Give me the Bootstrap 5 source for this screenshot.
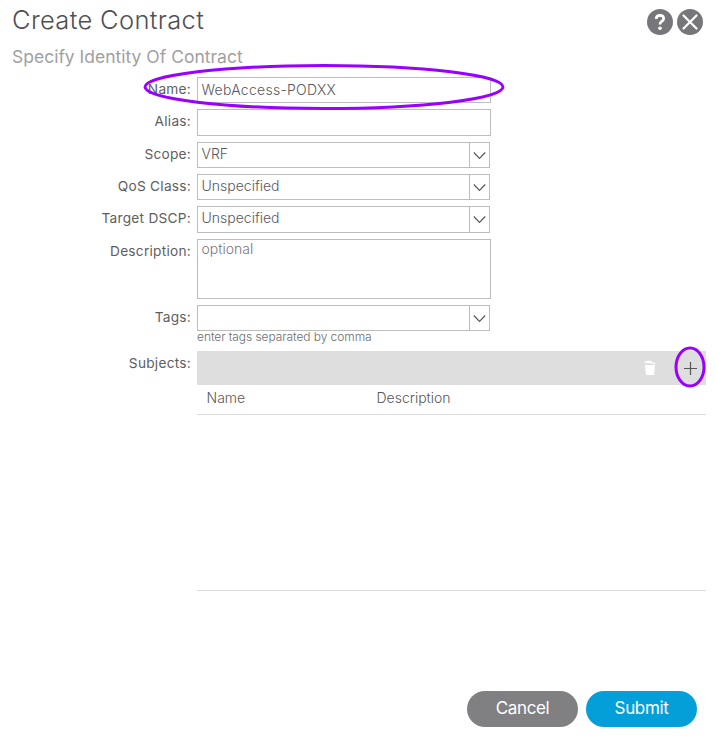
<!DOCTYPE html>
<html lang="en">
<head>
<meta charset="utf-8">
<meta name="viewport" content="width=device-width, initial-scale=1">
<title>Create Contract</title>
<link href="https://cdn.jsdelivr.net/npm/bootstrap@5.3.0/dist/css/bootstrap.min.css" rel="stylesheet">
<style>
body{font-family:Inter,"Liberation Sans",sans-serif;font-size:14px;line-height:18px;color:#58585b;background:#fff}
.dialog{width:715px;height:737px;padding:0 9px 0 12px}
.dialog-head{height:45px;padding-top:4px}
.dialog-title{font-size:25.5px;font-weight:300;line-height:32px;color:#505052;letter-spacing:.34px}
.dialog-sub{font-size:17.5px;line-height:24px;height:32px;font-weight:400;color:#a0a0a2}
.round-icons{padding-top:5px;gap:4px;margin-right:3px}
.round-icons button{width:26px;height:26px}
.form-rows{gap:6px}
.lbl{width:179px;margin-right:6px;padding-top:3px;font-size:13.7px;letter-spacing:.25px;color:#5e5e61}
.field{width:294px;height:26px;border:1px solid #bdbdbd;padding:3px 3.500px;font-weight:300;color:#58585b;border-radius:0;background:#fff}
.field.name-value{letter-spacing:.27px}
.field.tall{height:27px}
.field.combo{width:293px;padding:0 0 0 3.5px}
.combo-text{padding-top:2px}
.combo-arrow{width:20px;border-left:1px solid #bdbdbd;padding-right:1px}
.field.area{height:60px;padding:0 3.5px;line-height:17px;color:#77777a}
.hint{font-size:12px;line-height:12px;height:13px;letter-spacing:-.07px;font-weight:300;color:#6c6c6f}
.subjects{margin-top:1px}
.toolbar{height:34px;background:#dedede;padding-right:9px}
.trash{margin-right:26px}
.cols{height:30px;border-bottom:1px solid #dcdcdc;font-weight:300;padding:4px 0 0 9.5px}
.cols span:first-child{width:170px}
.grid-body{height:176px;border-bottom:1px solid #dcdcdc}
.pill{width:111px;height:36px;border:0;font-size:17px;line-height:24px;letter-spacing:-.35px;color:#fff;padding:0 0 3px}
.pill-grey{background:#808083}
.pill-blue{background:#049fd9}
.foot{margin-top:100px;gap:8px;padding-right:9px}
.ring{left:0;top:0;pointer-events:none}
</style>
<script src="https://cdn.jsdelivr.net/npm/bootstrap@5.3.0/dist/js/bootstrap.bundle.min.js"></script>
</head>
<body class="overflow-hidden">
<main class="dialog position-relative">
  <header class="dialog-head d-flex justify-content-between">
    <h1 class="dialog-title m-0">Create Contract</h1>
    <div class="round-icons d-flex">
      <button class="btn p-0 border-0 d-flex" aria-label="Help"><svg width="26" height="26" viewBox="0 0 26 26"><circle cx="13" cy="13" r="13" fill="#77777b"/><path d="M9.3 10V9.2Q9.6 6.3 13 6.3Q16.7 6.400 16.7 9.6Q16.7 11.3 14.7 12.4Q13 13.3 13 15.5" fill="none" stroke="#fff" stroke-width="2.7"/><circle cx="13" cy="19.3" r="1.8" fill="#fff"/></svg></button>
      <button class="btn p-0 border-0 d-flex" aria-label="Close"><svg width="26" height="26" viewBox="0 0 26 26"><circle cx="13" cy="13" r="13" fill="#77777b"/><path d="M6.5 6.5L19.5 19.5M19.5 6.5L6.5 19.5" stroke="#fff" stroke-width="2.2" stroke-linecap="round"/></svg></button>
    </div>
  </header>
  <h2 class="dialog-sub m-0">Specify Identity Of Contract</h2>
  <form class="form-rows d-flex flex-column">
    <div class="d-flex"><label class="lbl text-end">Name:</label><div class="field name-value">WebAccess-PODXX</div></div>
    <div class="d-flex"><label class="lbl text-end">Alias:</label><div class="field tall"></div></div>
    <div class="d-flex"><label class="lbl text-end">Scope:</label><div class="field combo d-flex"><span class="combo-text flex-grow-1">VRF</span><span class="combo-arrow d-flex align-items-center justify-content-center"><svg width="13" height="9" viewBox="0 0 13 9"><path d="M.8 1.5L6.5 7.3L12.2 1.5" fill="none" stroke="#58585b" stroke-width="1.2"/></svg></span></div></div>
    <div class="d-flex"><label class="lbl text-end">QoS Class:</label><div class="field combo d-flex"><span class="combo-text flex-grow-1">Unspecified</span><span class="combo-arrow d-flex align-items-center justify-content-center"><svg width="13" height="9" viewBox="0 0 13 9"><path d="M.8 1.5L6.5 7.3L12.2 1.5" fill="none" stroke="#58585b" stroke-width="1.2"/></svg></span></div></div>
    <div class="d-flex"><label class="lbl text-end">Target DSCP:</label><div class="field combo tall d-flex"><span class="combo-text flex-grow-1">Unspecified</span><span class="combo-arrow d-flex align-items-center justify-content-center"><svg width="13" height="9" viewBox="0 0 13 9"><path d="M.8 1.5L6.5 7.3L12.2 1.5" fill="none" stroke="#58585b" stroke-width="1.2"/></svg></span></div></div>
    <div class="d-flex"><label class="lbl text-end">Description:</label><div class="field area">optional</div></div>
    <div class="d-flex"><label class="lbl text-end">Tags:</label><div><div class="field combo d-flex"><span class="flex-grow-1"></span><span class="combo-arrow d-flex align-items-center justify-content-center"><svg width="13" height="9" viewBox="0 0 13 9"><path d="M.8 1.5L6.5 7.3L12.2 1.5" fill="none" stroke="#58585b" stroke-width="1.2"/></svg></span></div><div class="hint">enter tags separated by comma</div></div></div>
    <div class="subjects d-flex"><label class="lbl text-end">Subjects:</label>
      <div class="flex-grow-1">
        <div class="toolbar d-flex justify-content-end align-items-center">
          <svg class="trash" width="17" height="18" viewBox="0 0 17 18"><path d="M3.500 2.7L6 2.3L6.5 1.600L10 2L10.5 2.8L14.6 4.200V5.200L10 4.200L3.500 4ZM4 6H14L13 16H5Z" fill="#fff"/></svg>
          <svg width="13" height="13" viewBox="0 0 13 13"><path d="M6.5 0V13M0 6.5H13" stroke="#58585b" stroke-width="1.2"/></svg>
        </div>
        <div class="cols d-flex"><span>Name</span><span>Description</span></div>
        <div class="grid-body"></div>
      </div>
    </div>
  </form>
  <footer class="foot d-flex justify-content-end">
    <button class="btn pill pill-grey rounded-pill">Cancel</button>
    <button class="btn pill pill-blue rounded-pill">Submit</button>
  </footer>
  <svg class="ring position-absolute" width="715" height="400" viewBox="0 0 715 400" fill="none" stroke="#9900ff" stroke-width="3"><ellipse cx="324" cy="87" rx="179" ry="21.5"/><ellipse cx="690" cy="367" rx="14" ry="19"/></svg>
</main>
</body>
</html>
